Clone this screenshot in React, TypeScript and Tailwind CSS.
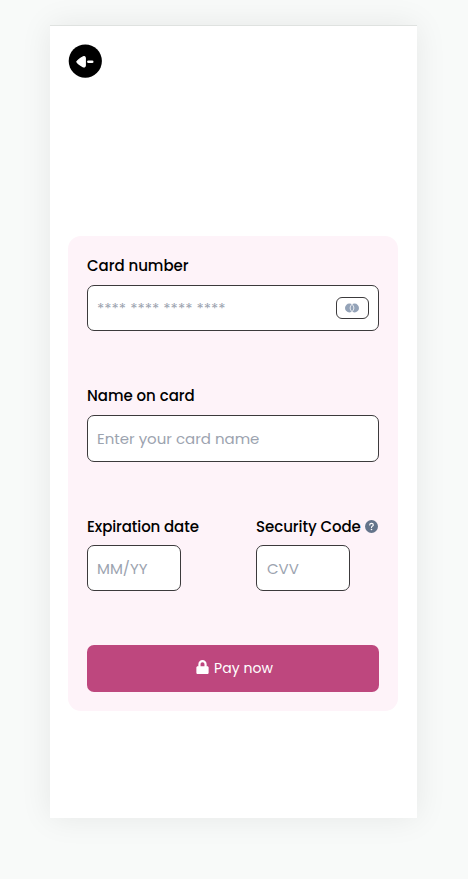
import type { ReactNode } from "react";
import { FaLock } from "react-icons/fa";

const inputStyle =
  "block w-full rounded-[7px] border border-[#3c3a3c] bg-white text-[15px] leading-5 text-black outline-none placeholder:text-[#9ca3af] placeholder:opacity-100";

function Label({ children, className }: { children: ReactNode; className: string }) {
  return (
    <span className={`block h-6 whitespace-nowrap text-[15px] leading-6 font-medium text-black ${className}`}>
      {children}
    </span>
  );
}

function BackButton() {
  return (
    <button aria-label="Back" className="ml-[18px] block h-[34px] w-[34px]">
      <svg viewBox="0 0 34 34" className="block h-full w-full">
        <circle cx="17.3" cy="17.1" r="16.6" fill="#000" />
        <path
          d="M8.9 17.8 Q10 15.6 15 13 Q17.2 12 17.2 14.2 V21.2 Q17.2 23.5 15 22.5 Q10 20 8.9 17.8 Z"
          fill="#fff"
          stroke="#fff"
          strokeWidth="1.4"
          strokeLinejoin="round"
        />
        <path d="M20.4 17.8 H24.2" stroke="#fff" strokeWidth="2.6" strokeLinecap="round" />
      </svg>
    </button>
  );
}

function CardBrand() {
  return (
    <span className="flex h-[22px] w-[33px] items-center justify-center rounded-[6px] border border-[#3c3a3c] bg-white">
      <svg width="14" height="10" viewBox="0 0 14 10" className="-ml-px">
        <circle cx="4.4" cy="5" r="4.4" fill="#94a3b8" />
        <circle cx="9.6" cy="5" r="4.4" fill="#94a3b8" />
        <path d="M7 1.2 Q3.2 5 7 8.8 Q10.8 5 7 1.2" fill="#94a3b8" stroke="#fff" strokeWidth="0.8" />
      </svg>
    </span>
  );
}

function HelpIcon() {
  return (
    <svg viewBox="0 0 13 13" className="-mt-[2px] h-[13px] w-[13px] shrink-0">
      <circle cx="6.5" cy="6.5" r="6.5" fill="#64748b" />
      <path
        d="M4.7 4.9 C4.7 2.8 8.3 2.8 8.3 4.9 C8.3 6.2 6.5 6.1 6.5 7.5"
        fill="none"
        stroke="#fff"
        strokeWidth="1.15"
        strokeLinecap="round"
      />
      <circle cx="6.5" cy="9.5" r="0.8" fill="#fff" />
    </svg>
  );
}

export default function App() {
  return (
    <main className="flex h-[879px] w-[468px] items-start overflow-hidden bg-[#f8faf9] pt-[25px] pl-[50px] font-[Poppins,Inter,sans-serif]">
      <section className="h-[793px] w-[367px] border-t border-[#dfe2e0] bg-white pt-[18px] shadow-[0_0_30px_rgba(0,0,0,0.08)]">
        <BackButton />
        <form className="mt-[158px] ml-[18px] flex h-[475px] w-[330px] flex-col rounded-[13px] bg-[#fef3f9] px-[19px] pt-[18px]">
          <label className="block">
            <Label className="tracking-[-0.03px]">Card number</Label>
            <span className="mt-[7px] grid">
              <input
                className={`${inputStyle} col-start-1 row-start-1 h-[46px] pl-[9px]`}
                placeholder="**** **** **** ****"
              />
              <span className="col-start-1 row-start-1 mr-[10px] self-center justify-self-end">
                <CardBrand />
              </span>
            </span>
          </label>
          <label className="mt-[53px] block">
            <Label className="tracking-[-0.03px]">Name on card</Label>
            <input className={`${inputStyle} mt-[7px] h-[47px] pl-[9px]`} placeholder="Enter your card name" />
          </label>
          <div className="mt-[53px] flex justify-between">
            <label className="block w-[94px]">
              <Label className="tracking-[-0.1px]">Expiration date</Label>
              <input className={`${inputStyle} mt-[6px] h-[46px] pl-[9px]`} placeholder="MM/YY" />
            </label>
            <label className="block w-[123px]">
              <span className="flex items-center">
                <Label className="w-[109px] tracking-[-0.06px]">Security Code</Label>
                <HelpIcon />
              </span>
              <span className="mt-[6px] block w-[94px]">
                <input className={`${inputStyle} h-[46px] pl-[10px]`} placeholder="CVV" />
              </span>
            </label>
          </div>
          <button
            type="button"
            className="mt-[54px] flex h-[47px] w-full items-center rounded-[7px] bg-[#be477e] pl-[109px] text-[14px] text-white"
          >
            <FaLock className="-mt-[3px] mr-[5px] h-[14px] w-[13px]" />
            <span className="whitespace-nowrap tracking-[0.08px]">Pay now</span>
          </button>
        </form>
      </section>
    </main>
  );
}
